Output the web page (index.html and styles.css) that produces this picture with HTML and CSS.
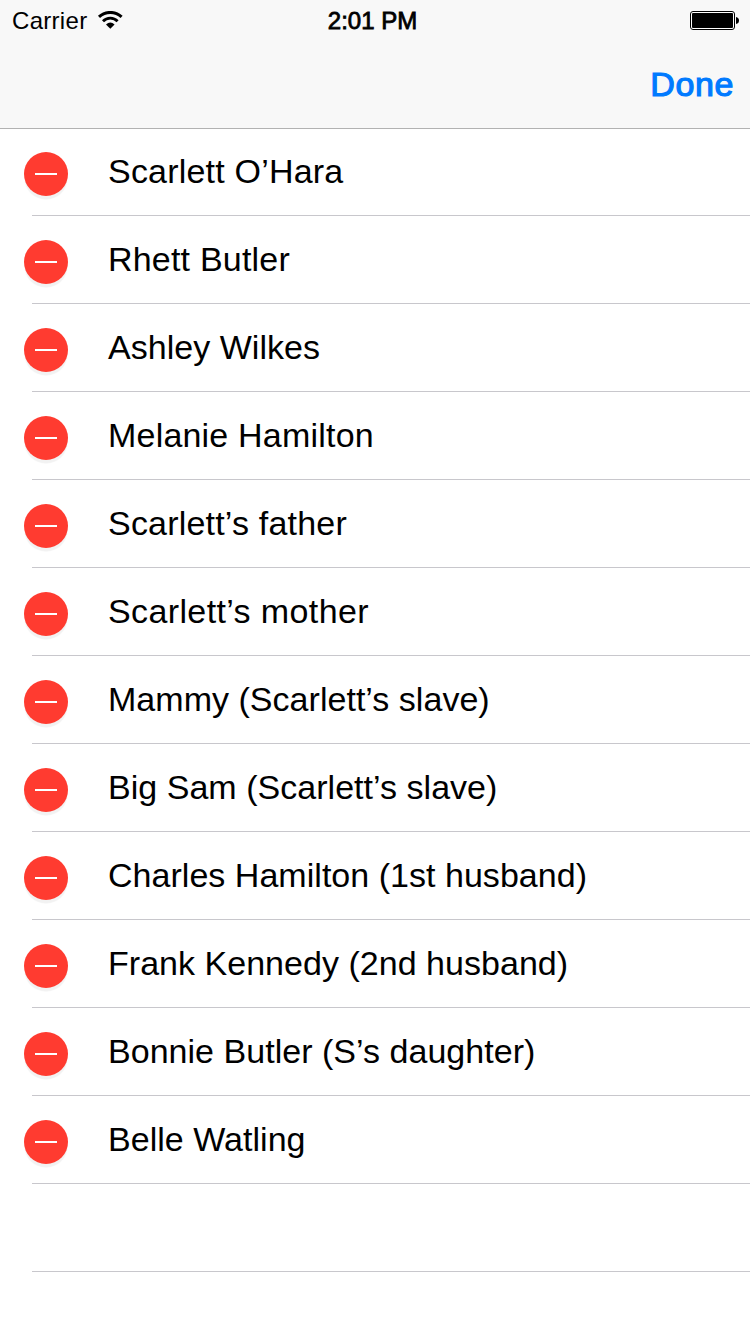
FILE: index.html
```html
<!DOCTYPE html>
<html lang="en">
<head>
    <meta charset="UTF-8">
    <meta name="viewport" content="width=device-width, initial-scale=1.0">
    <title>Characters</title>
    <link rel="stylesheet" href="styles.css">
</head>
<body>

<header class="header">
    <div class="status-bar">
        <div class="carrier">
            <span class="carrier-name">Carrier</span>
            <svg class="wifi" width="26" height="20" viewBox="0 0 26 20">
                <path d="M2 5.9 A16.5 16.5 0 0 1 24.6 5.9" fill="none" stroke="#000" stroke-width="3"/>
                <path d="M6 10.3 A10.2 10.2 0 0 1 20.6 10.3" fill="none" stroke="#000" stroke-width="2.8"/>
                <path d="M9 13.4 Q13.3 9.6 17.6 13.4 L13.3 17.7 Z"/>
            </svg>
        </div>
        <span class="time">2:01 PM</span>
        <svg class="battery" width="49" height="19" viewBox="0 0 49 19">
            <rect x="0.5" y="0.5" width="44" height="18" rx="2.5" fill="#fff" stroke="#000"/>
            <rect x="2" y="2" width="41" height="15" rx="1"/>
            <path d="M46 6 Q49 6.5 49 9.5 Q49 12.5 46 13 Z"/>
        </svg>
    </div>
    <div class="nav-bar">
        <button class="done-button">Done</button>
    </div>
</header>

<ul class="list">
    <li class="row"><button class="delete-button" aria-label="Delete"></button><span class="name">Scarlett O’Hara</span></li>
    <li class="row"><button class="delete-button" aria-label="Delete"></button><span class="name">Rhett Butler</span></li>
    <li class="row"><button class="delete-button" aria-label="Delete"></button><span class="name tight">Ashley Wilkes</span></li>
    <li class="row"><button class="delete-button" aria-label="Delete"></button><span class="name">Melanie Hamilton</span></li>
    <li class="row"><button class="delete-button" aria-label="Delete"></button><span class="name">Scarlett’s father</span></li>
    <li class="row"><button class="delete-button" aria-label="Delete"></button><span class="name wide">Scarlett’s mother</span></li>
    <li class="row"><button class="delete-button" aria-label="Delete"></button><span class="name tight">Mammy (Scarlett’s slave)</span></li>
    <li class="row"><button class="delete-button" aria-label="Delete"></button><span class="name tight">Big Sam (Scarlett’s slave)</span></li>
    <li class="row"><button class="delete-button" aria-label="Delete"></button><span class="name tight">Charles Hamilton (1st husband)</span></li>
    <li class="row"><button class="delete-button" aria-label="Delete"></button><span class="name tight">Frank Kennedy (2nd husband)</span></li>
    <li class="row"><button class="delete-button" aria-label="Delete"></button><span class="name tight">Bonnie Butler (S’s daughter)</span></li>
    <li class="row"><button class="delete-button" aria-label="Delete"></button><span class="name tight">Belle Watling</span></li>
    <li class="row"></li>
</ul>

</body>
</html>
```

FILE: styles.css
```css
* {
    box-sizing: border-box;
}

body {
    margin: 0;
    background-color: #fff;
    color: #000;
    font-family: "Liberation Sans", Arial, sans-serif;
}

button {
    border: none;
    padding: 0;
    font-family: inherit;
    cursor: pointer;
}

.header {
    height: 129px;
    background-color: #f8f8f8;
    border-bottom: 1px solid #b2b2b2;
}

.status-bar {
    display: grid;
    grid-template-columns: 1fr auto 1fr;
    align-items: center;
    height: 40px;
    padding: 0 11px 0 12px;
    font-size: 24px;
}

.carrier {
    display: flex;
    align-items: center;
    gap: 10px;
    padding-top: 2px;
    line-height: 38px;
}

.carrier-name {
    letter-spacing: 0.3px;
}

.time {
    padding-top: 2px;
    margin-right: 6px;
    line-height: 38px;
    -webkit-text-stroke: 0.8px #000;
}

.battery {
    justify-self: end;
}

.nav-bar {
    display: flex;
    justify-content: flex-end;
    align-items: center;
    height: 88px;
    padding-right: 16px;
}

.done-button {
    background: none;
    color: #007aff;
    font-size: 34px;
    line-height: 88px;
    letter-spacing: 0.6px;
    -webkit-text-stroke: 1.2px #007aff;
}

.list {
    list-style: none;
    margin: -1px 0 0;
    padding: 0 0 0 32px;
}

.row {
    display: flex;
    align-items: center;
    height: 88px;
    border-bottom: 1px solid #c8c7cc;
}

/* the circle hangs out to the left of the separator */
.delete-button {
    display: flex;
    align-items: center;
    justify-content: center;
    flex-shrink: 0;
    width: 44px;
    height: 44px;
    margin: 5px 40px 0 -8px;
    border-radius: 50%;
    background-color: #ff3b30;
    box-shadow: 0 4px 1px -0.5px #f2f2f2;
}

.delete-button::before {
    content: "";
    width: 22px;
    height: 2px;
    background-color: #fff;
}

.name {
    padding-bottom: 2px;
    font-size: 34px;
    line-height: 40px;
    letter-spacing: 0.2px;
    white-space: nowrap;
}

.name.tight {
    letter-spacing: 0.03px;
}

.name.wide {
    letter-spacing: 0.38px;
}
```
